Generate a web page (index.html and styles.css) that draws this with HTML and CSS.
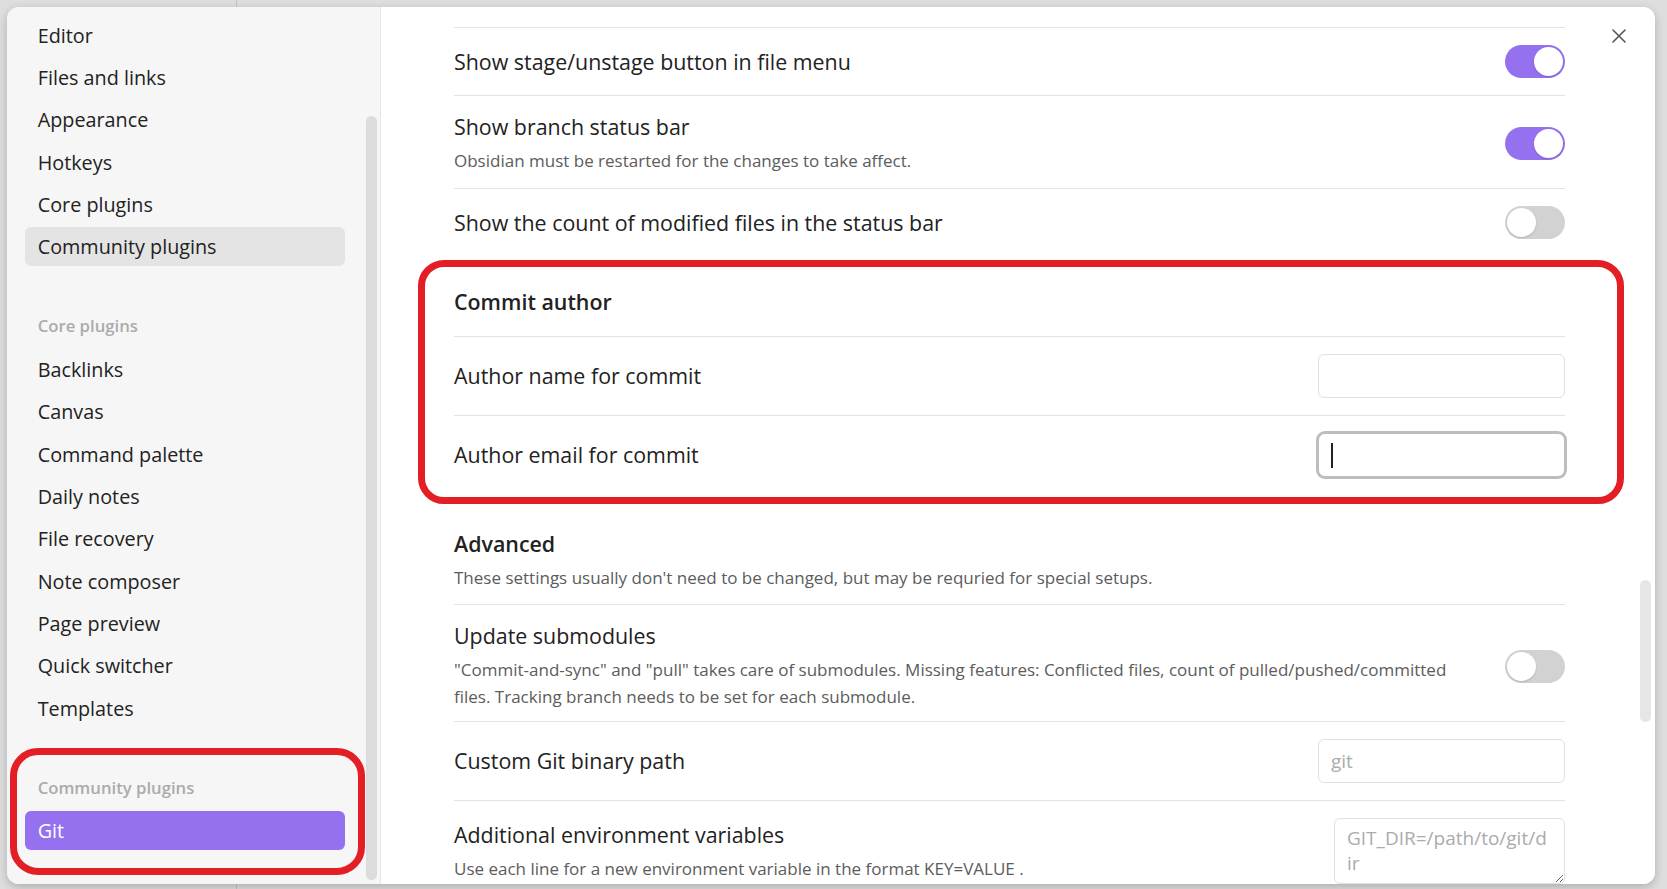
FILE: index.html
```html
<!DOCTYPE html>
<html lang="en">
<head>
<meta charset="utf-8">
<title>Settings</title>
<link rel="stylesheet" href="styles.css">
</head>
<body>
<div class="modal">
  <nav class="sidebar">
    <div class="nav-col">
      <div class="nav-item">Editor</div>
      <div class="nav-item">Files and links</div>
      <div class="nav-item">Appearance</div>
      <div class="nav-item">Hotkeys</div>
      <div class="nav-item">Core plugins</div>
      <div class="nav-item hover">Community plugins</div>

      <div class="nav-heading">Core plugins</div>
      <div class="nav-item">Backlinks</div>
      <div class="nav-item">Canvas</div>
      <div class="nav-item">Command palette</div>
      <div class="nav-item">Daily notes</div>
      <div class="nav-item">File recovery</div>
      <div class="nav-item">Note composer</div>
      <div class="nav-item">Page preview</div>
      <div class="nav-item">Quick switcher</div>
      <div class="nav-item">Templates</div>

      <div class="nav-heading">Community plugins</div>
      <div class="nav-item active">Git</div>
    </div>
    <div class="scroll-track side-track"><div class="thumb"></div></div>
  </nav>

  <main class="content">
    <div class="settings">
      <div class="setting-item">
        <div class="info"><div class="name">Show stage/unstage button in file menu</div></div>
        <div class="toggle on"><div class="knob"></div></div>
      </div>
      <div class="setting-item has-desc">
        <div class="info">
          <div class="name">Show branch status bar</div>
          <div class="desc">Obsidian must be restarted for the changes to take affect.</div>
        </div>
        <div class="toggle on"><div class="knob"></div></div>
      </div>
      <div class="setting-item">
        <div class="info"><div class="name">Show the count of modified files in the status bar</div></div>
        <div class="toggle"><div class="knob"></div></div>
      </div>

      <div class="setting-item heading">
        <div class="info"><div class="name">Commit author</div></div>
      </div>
      <div class="setting-item">
        <div class="info"><div class="name">Author name for commit</div></div>
        <input class="text-input" type="text" spellcheck="false">
      </div>
      <div class="setting-item">
        <div class="info"><div class="name">Author email for commit</div></div>
        <div class="text-input focused"><span class="caret"></span></div>
      </div>

      <div class="setting-item heading heading-desc">
        <div class="info">
          <div class="name">Advanced</div>
          <div class="desc">These settings usually don't need to be changed, but may be requried for special setups.</div>
        </div>
      </div>
      <div class="setting-item has-desc multi">
        <div class="info">
          <div class="name">Update submodules</div>
          <div class="desc">"Commit-and-sync" and "pull" takes care of submodules. Missing features: Conflicted files, count of pulled/pushed/committed files. Tracking branch needs to be set for each submodule.</div>
        </div>
        <div class="toggle"><div class="knob"></div></div>
      </div>
      <div class="setting-item">
        <div class="info"><div class="name">Custom Git binary path</div></div>
        <input class="text-input" type="text" placeholder="git" spellcheck="false">
      </div>
      <div class="setting-item">
        <div class="info">
          <div class="name">Additional environment variables</div>
          <div class="desc">Use each line for a new environment variable in the format KEY=VALUE .</div>
        </div>
        <textarea class="text-area" placeholder="GIT_DIR=/path/to/git/d&#10;ir" spellcheck="false"></textarea>
      </div>
    </div>
    <div class="scroll-track main-track"><div class="thumb"></div></div>
    <button class="close" aria-label="Close">
      <svg viewBox="0 0 16 16" width="16" height="16"><path d="M2 2 L14 14 M14 2 L2 14" stroke="#555" stroke-width="1.6" fill="none" stroke-linecap="round"/></svg>
    </button>
  </main>
</div>

<div class="annot annot-side"></div>
<div class="annot annot-main"></div>
</body>
</html>
```

FILE: styles.css
```css
* { box-sizing: border-box; }

html, body { margin: 0; }

body {
  position: relative;
  width: 1667px;
  height: 889px;
  overflow: hidden;
  padding: 7px 12px 5px 7px;
  font-family: "Open Sans", "Noto Sans", sans-serif;
  color: #222;
  background:
    linear-gradient(to right, transparent 236px, #c4c4c4 236px, #c4c4c4 237px, transparent 237px),
    #dedede;
}

.modal {
  display: flex;
  width: 1648px;
  height: 877px;
  background: #fff;
  border-radius: 12px;
  overflow: hidden;
  box-shadow: 0 3px 10px rgba(0, 0, 0, 0.22);
}

/* Sidebar */
.sidebar {
  display: flex;
  flex: none;
  width: 374px;
  padding: 8.5px 0 4px 18px;
  background: #f6f6f6;
  border-right: 1px solid #e6e6e6;
}

.nav-col {
  flex: none;
  width: 320px;
}

.nav-item {
  height: 39px;
  line-height: 39px;
  padding-left: 12.7px;
  margin-bottom: 3.4px;
  border-radius: 6px;
  font-size: 19.8px;
  white-space: nowrap;
  color: #222;
}

.nav-item.hover { background: #e4e4e4; }

.nav-item.active {
  background: #9571f0;
  color: #fff;
}

.nav-heading {
  height: 24px;
  line-height: 24px;
  margin: 47.8px 0 11.5px;
  padding-left: 12.7px;
  font-size: 16.7px;
  font-weight: 600;
  color: #ababab;
}

.scroll-track {
  flex: none;
  width: 11px;
  display: flex;
  flex-direction: column;
}

.side-track { margin-left: 21px; }

.side-track .thumb {
  flex: 1;
  margin-top: 100.5px;
  background: #dcdcdc;
  border-radius: 6px;
}

/* Main content */
.content {
  position: relative;
  flex: 1;
  display: flex;
  align-items: flex-start;
  padding: 20px 0 0 73px;
  background: #fff;
}

.settings {
  flex: none;
  width: 1111px;
}

.main-track { margin-left: 75px; }

.main-track .thumb {
  height: 142px;
  margin-top: 553px;
  background: #e6e6e6;
  border-radius: 6px;
}

.close {
  position: absolute;
  top: 21px;
  right: 28px;
  width: 16px;
  height: 16px;
  padding: 0;
  border: none;
  background: none;
}

.close svg { display: block; }

.setting-item {
  display: flex;
  align-items: center;
  padding: 17px 0;
  border-top: 1px solid #e3e3e3;
}

.setting-item.has-desc { padding-bottom: 14px; }
.setting-item.multi { padding-bottom: 11px; }

.setting-item.heading {
  border-top: none;
  padding: 32px 0 20px;
}

.setting-item.heading-desc { padding: 36px 0 13px; }

.info {
  flex: 1;
  min-width: 0;
  margin-right: 24px;
}

.name {
  font-size: 21.4px;
  line-height: 28px;
  color: #222;
}

.heading .name { font-weight: 600; }

.desc {
  margin-top: 6px;
  font-size: 17px;
  line-height: 27px;
  color: #5c5c5c;
}

/* Toggle */
.toggle {
  flex: none;
  display: flex;
  align-items: center;
  width: 60px;
  height: 33px;
  padding: 2px;
  border-radius: 17px;
  background: #d2d2d2;
}

.toggle.on {
  justify-content: flex-end;
  background: #9571f0;
}

.knob {
  width: 29px;
  height: 29px;
  border-radius: 50%;
  background: #fff;
  box-shadow: 0 1px 2px rgba(0, 0, 0, 0.15);
}

/* Inputs */
.text-input {
  flex: none;
  display: flex;
  align-items: center;
  width: 247px;
  height: 44px;
  padding: 0 12px;
  border: 1px solid #e0e0e0;
  border-radius: 6px;
  background: #fff;
  font-family: "Open Sans", "Noto Sans", sans-serif;
  font-size: 19px;
  color: #222;
  outline: none;
}

.text-input::placeholder { color: #ababab; }

.text-input.focused {
  border-color: #bdbdbd;
  box-shadow: 0 0 0 2px #bdbdbd;
  border-radius: 7px;
}

.caret {
  display: inline-block;
  width: 2px;
  height: 25px;
  background: #222;
}

.text-area {
  flex: none;
  width: 231px;
  height: 66px;
  padding: 7px 6px 4px 12px;
  border: 1px solid #e0e0e0;
  border-radius: 6px;
  background: #fff;
  font-family: "Open Sans", "Noto Sans", sans-serif;
  font-size: 19px;
  line-height: 25px;
  color: #222;
  outline: none;
}

.text-area::placeholder { color: #ababab; }

/* Red annotation frames drawn over the screenshot */
.annot {
  position: absolute;
  border: 7px solid #e31e25;
  pointer-events: none;
}

.annot-side {
  left: 10px;
  top: 748px;
  width: 355px;
  height: 127px;
  border-radius: 28px;
}

.annot-main {
  left: 418px;
  top: 260px;
  width: 1206px;
  height: 244px;
  border-radius: 26px;
}
```
